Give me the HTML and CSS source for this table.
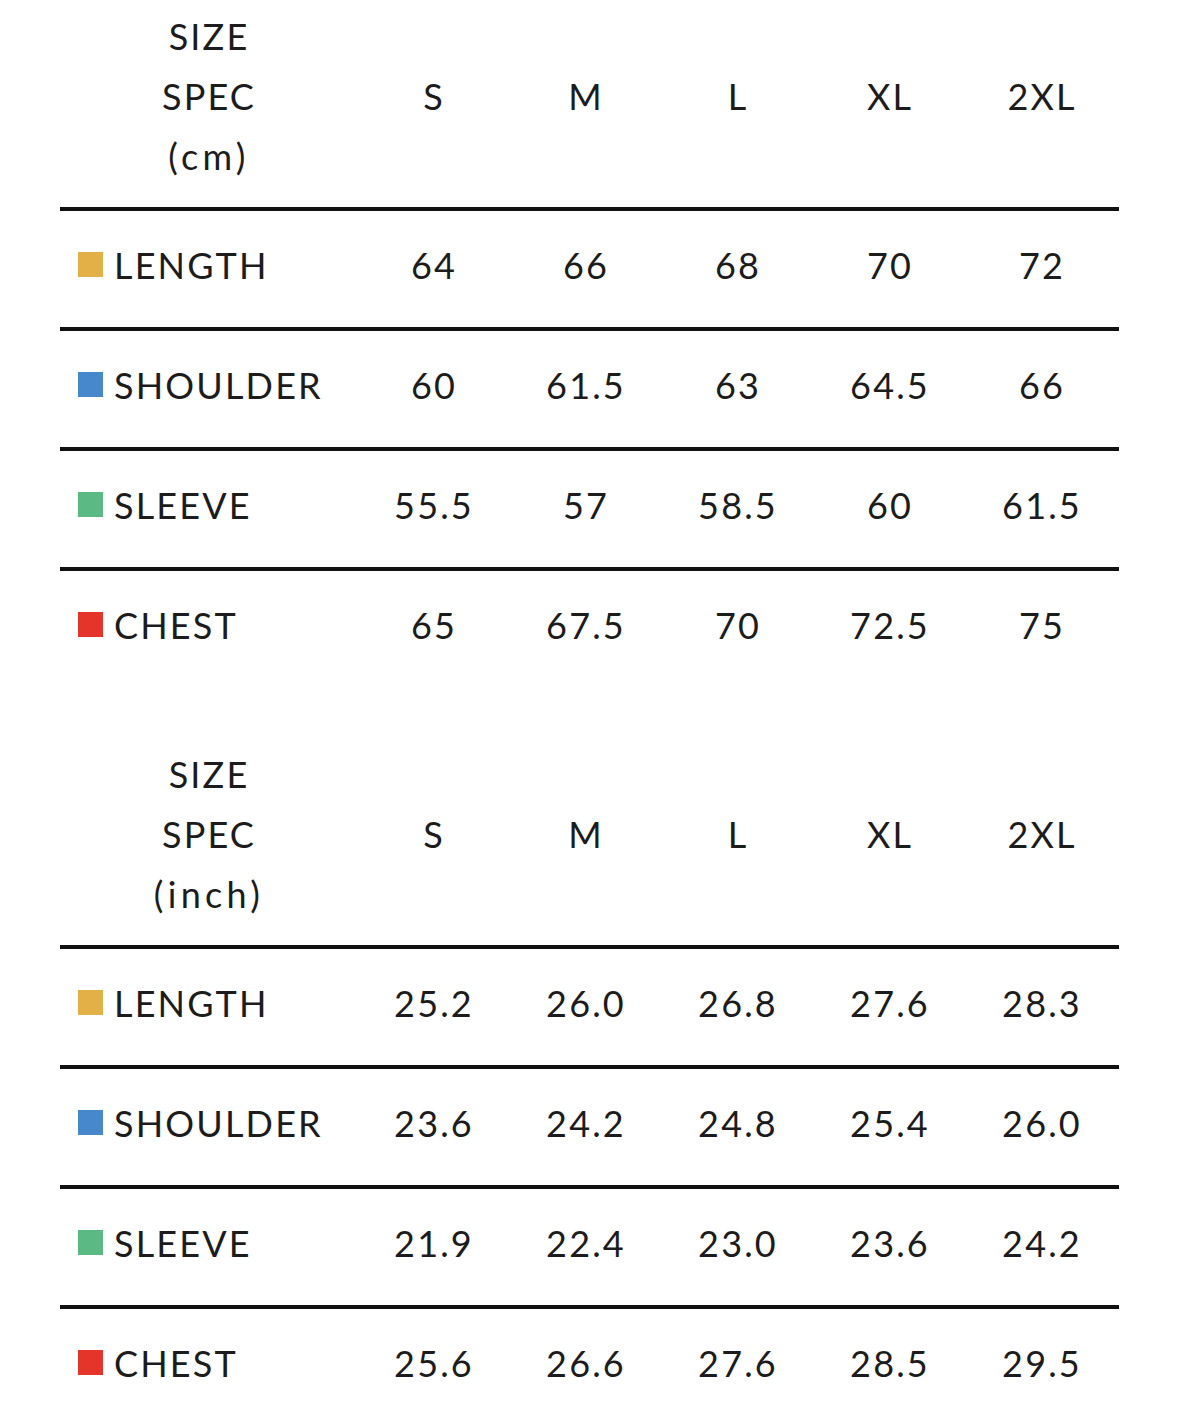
FILE: index.html
```html
<!DOCTYPE html>
<html>
<head>
<meta charset="utf-8">
<link rel="stylesheet" href="styles.css">
</head>
<body>
<div class="page">
  <div class="spec">
    <div class="row head">
      <div class="cell title">SIZE<br>SPEC<br><span class="unit">(cm)</span></div>
      <div class="cell">S</div><div class="cell">M</div><div class="cell">L</div><div class="cell">XL</div><div class="cell">2XL</div>
    </div>
    <div class="row">
      <div class="cell label"><span class="sw yellow"></span>LENGTH</div>
      <div class="cell">64</div><div class="cell">66</div><div class="cell">68</div><div class="cell">70</div><div class="cell">72</div>
    </div>
    <div class="row">
      <div class="cell label"><span class="sw blue"></span>SHOULDER</div>
      <div class="cell">60</div><div class="cell">61.5</div><div class="cell">63</div><div class="cell">64.5</div><div class="cell">66</div>
    </div>
    <div class="row">
      <div class="cell label"><span class="sw green"></span>SLEEVE</div>
      <div class="cell">55.5</div><div class="cell">57</div><div class="cell">58.5</div><div class="cell">60</div><div class="cell">61.5</div>
    </div>
    <div class="row">
      <div class="cell label"><span class="sw red"></span>CHEST</div>
      <div class="cell">65</div><div class="cell">67.5</div><div class="cell">70</div><div class="cell">72.5</div><div class="cell">75</div>
    </div>
  </div>

  <div class="spec second">
    <div class="row head">
      <div class="cell title">SIZE<br>SPEC<br><span class="unit">(inch)</span></div>
      <div class="cell">S</div><div class="cell">M</div><div class="cell">L</div><div class="cell">XL</div><div class="cell">2XL</div>
    </div>
    <div class="row">
      <div class="cell label"><span class="sw yellow"></span>LENGTH</div>
      <div class="cell">25.2</div><div class="cell">26.0</div><div class="cell">26.8</div><div class="cell">27.6</div><div class="cell">28.3</div>
    </div>
    <div class="row">
      <div class="cell label"><span class="sw blue"></span>SHOULDER</div>
      <div class="cell">23.6</div><div class="cell">24.2</div><div class="cell">24.8</div><div class="cell">25.4</div><div class="cell">26.0</div>
    </div>
    <div class="row">
      <div class="cell label"><span class="sw green"></span>SLEEVE</div>
      <div class="cell">21.9</div><div class="cell">22.4</div><div class="cell">23.0</div><div class="cell">23.6</div><div class="cell">24.2</div>
    </div>
    <div class="row">
      <div class="cell label"><span class="sw red"></span>CHEST</div>
      <div class="cell">25.6</div><div class="cell">26.6</div><div class="cell">27.6</div><div class="cell">28.5</div><div class="cell">29.5</div>
    </div>
  </div>
</div>
</body>
</html>
```

FILE: styles.css
```css
html, body {
  margin: 0;
  padding: 0;
  background: #ffffff;
}

body {
  font-family: Lato, "Noto Sans", sans-serif;
  font-size: 36px;
  color: #1c1c1c;
  letter-spacing: 0.06em;
}

.page {
  padding-left: 60px;
  width: 1059px;
}

.spec.second {
  margin-top: 51px;
}

.row {
  display: grid;
  grid-template-columns: 298px repeat(5, 152px);
  border-top: 4px solid #111111;
  height: 116px;
  align-items: center;
}

.row.head {
  border-top: none;
  height: 207px;
  align-items: start;
}

.cell {
  text-align: center;
  padding-bottom: 9px;
}

.head .cell {
  padding-top: 6px;
  line-height: 60px;
  padding-bottom: 0;
}

.head .cell:not(.title) {
  padding-top: 66px;
}

.unit {
  letter-spacing: 0.12em;
}

.cell.label {
  display: flex;
  align-items: center;
  text-align: left;
  padding-left: 18px;
}

.sw {
  display: inline-block;
  width: 25px;
  height: 25px;
  margin-right: 11px;
  flex: none;
}

.yellow { background: #e3af47; }
.blue { background: #4787cc; }
.green { background: #5bba83; }
.red { background: #e5352a; }
```
